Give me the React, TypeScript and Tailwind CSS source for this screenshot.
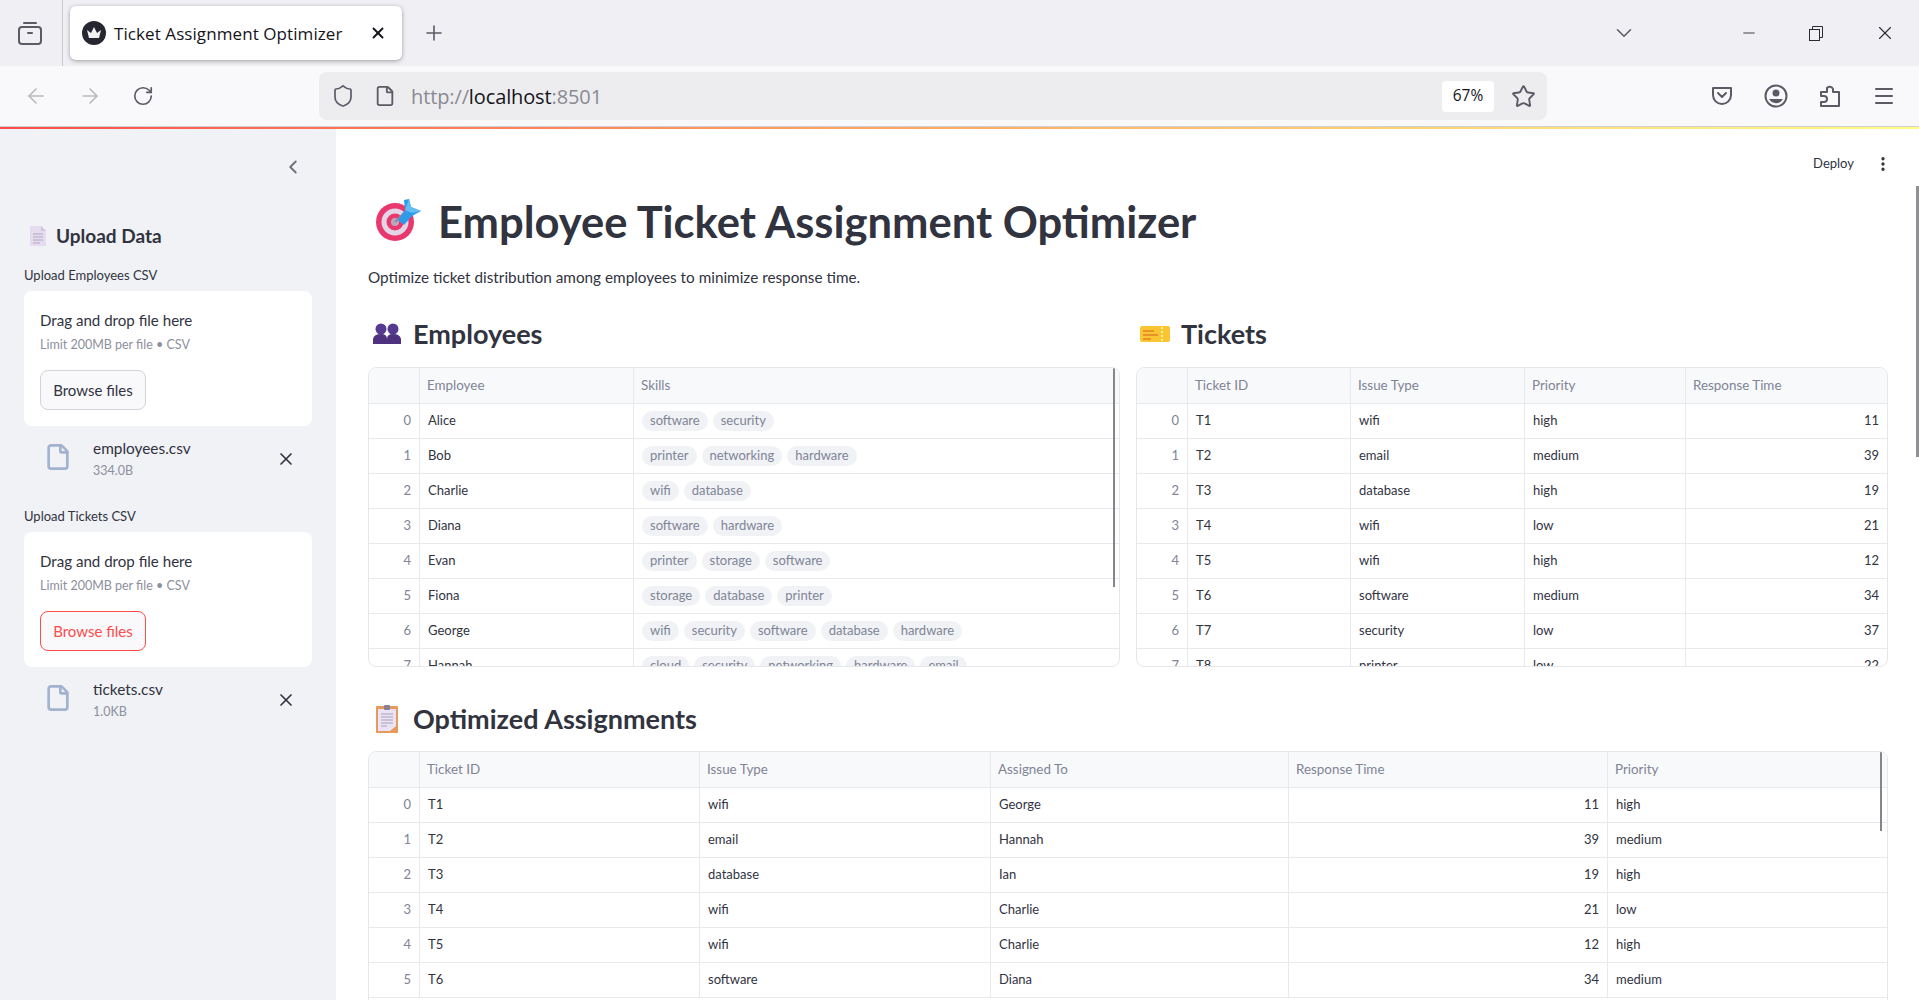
import React from "react";
import { ArrowLeft, ArrowRight, ChevronDown, ChevronLeft, EllipsisVertical, File, Menu, Minus, Plus, RotateCw, Shield, Star, X } from "lucide-react";

const employees: [string, string[]][] = [
  ["Alice", ["software", "security"]],
  ["Bob", ["printer", "networking", "hardware"]],
  ["Charlie", ["wifi", "database"]],
  ["Diana", ["software", "hardware"]],
  ["Evan", ["printer", "storage", "software"]],
  ["Fiona", ["storage", "database", "printer"]],
  ["George", ["wifi", "security", "software", "database", "hardware"]],
  ["Hannah", ["cloud", "security", "networking", "hardware", "email"]],
];

const tickets = [
  ["T1", "wifi", "high", "11"],
  ["T2", "email", "medium", "39"],
  ["T3", "database", "high", "19"],
  ["T4", "wifi", "low", "21"],
  ["T5", "wifi", "high", "12"],
  ["T6", "software", "medium", "34"],
  ["T7", "security", "low", "37"],
  ["T8", "printer", "low", "22"],
];

const assignments = [
  ["T1", "wifi", "George", "11", "high"],
  ["T2", "email", "Hannah", "39", "medium"],
  ["T3", "database", "Ian", "19", "high"],
  ["T4", "wifi", "Charlie", "21", "low"],
  ["T5", "wifi", "Charlie", "12", "high"],
  ["T6", "software", "Diana", "34", "medium"],
];

const cell = "flex items-center px-2 border-r border-b border-[#e8e9ec] last:border-r-0 overflow-hidden whitespace-nowrap";

function Uploader({ label, file, size, active }: { label: string; file: string; size: string; active?: boolean }) {
  return (
    <div>
      <div className="h-[31px] flex items-center text-[13px] text-[#31333f]">{label}</div>
      <div className="h-[135px] rounded-lg bg-white p-4 pt-[19px]">
        <div className="text-[15.1px] leading-5 text-[#31333f]">Drag and drop file here</div>
        <div className="mt-[7px] text-[12.5px] leading-4 text-[#8d8f9d]">Limit 200MB per file • CSV</div>
        <button
          className={`mt-[17px] h-10 w-[106px] rounded-lg border bg-[#f9f9fb] text-[15px] ${
            active ? "border-[#ff4b4b] text-[#ff4b4b]" : "border-[#d2d3d8] text-[#31333f]"
          }`}
        >
          Browse files
        </button>
      </div>
      <div className="flex items-center h-[65px] pl-[20px] pr-[16px]">
        <File size={28} strokeWidth={2.3} className="mb-[4px] text-[#a3b2ce] shrink-0" />
        <div className="ml-[21px] flex-1">
          <div className="text-[15.4px] leading-5 text-[#31333f]">{file}</div>
          <div className="mt-[5px] text-[12.5px] leading-4 text-[#8d8f9d]">{size}</div>
        </div>
        <X size={20} strokeWidth={2} className="text-[#31333f]" />
      </div>
    </div>
  );
}

function Chips({ items }: { items: string[] }) {
  return (
    <div className="flex gap-[5px]">
      {items.map((s) => (
        <span key={s} className="h-[20px] px-2 flex items-center rounded-full bg-[#f0f2f6] text-[#808495] text-[13px]">
          {s}
        </span>
      ))}
    </div>
  );
}

function TableShell({ grid, heads, children }: { grid: string; heads: string[]; children: React.ReactNode }) {
  return (
    <div className="relative h-[300px] overflow-hidden rounded-lg border border-[#e6e7ea] text-[13px] text-[#31333f]">
      <div className={`grid h-[36px] bg-[#f8f9fb] text-[#808495] text-[13.4px] ${grid}`}>
        <div className={cell} />
        {heads.map((h) => (
          <div key={h} className={cell}>
            <span className="-ml-[1px]">{h}</span>
          </div>
        ))}
      </div>
      {children}
    </div>
  );
}

function Row({ grid, index, children }: { grid: string; index: number; children: React.ReactNode }) {
  return (
    <div className={`grid h-[35px] ${grid}`}>
      <div className={`${cell} justify-end text-[#808495]`}>{index}</div>
      {children}
    </div>
  );
}

function Heading({ icon, title }: { icon: React.ReactNode; title: string }) {
  return (
    <div className="flex items-center h-[40px] gap-[11px] pl-[4px]">
      <div className="flex items-center justify-center w-[30px] shrink-0">{icon}</div>
      <h2 className="pb-[2px] text-[27px] font-bold text-[#31333f] leading-none whitespace-nowrap">{title}</h2>
    </div>
  );
}

function TargetIcon() {
  return (
    <svg width="48" height="48" viewBox="0 0 48 48" className="shrink-0 -mt-[8px]">
      <circle cx="21" cy="28" r="19" fill="#e8386e" />
      <circle cx="21" cy="28" r="13.5" fill="#e4d5e6" />
      <circle cx="21" cy="28" r="8.5" fill="#e8386e" />
      <circle cx="21" cy="28" r="4" fill="#b9a9bd" />
      <path d="M21 28 L30 19" stroke="#8a8ea0" strokeWidth="2" />
      <path d="M24 26 L31 16 L30 6 L35 5 L37 13 L47 17 L38 22 L30 31 Z" fill="#2f9be8" />
      <path d="M31 16 L35 5 L37 13 L47 17 L38 19 Z" fill="#62bdf3" />
    </svg>
  );
}

function PeopleIcon() {
  return (
    <svg width="28" height="22" viewBox="0 0 28 22">
      <circle cx="8" cy="6" r="5.5" fill="#553a8f" />
      <path d="M0 21 V16 Q1 11 8 11 Q14 11 14 16 V21 Z" fill="#4f327f" />
      <circle cx="20" cy="6" r="5.5" fill="#553a8f" />
      <path d="M14 21 V16 Q14 11 20 11 Q27 11 28 16 V21 Z" fill="#4f327f" />
    </svg>
  );
}

function TicketIcon() {
  return (
    <svg width="30" height="18" viewBox="0 0 30 18">
      <path d="M2 1 H28 Q30 1 30 3 V15 Q30 17 28 17 H2 Q0 17 0 15 V3 Q0 1 2 1 Z" fill="#fbc531" />
      <rect x="3" y="5" width="11" height="2" fill="#e8932a" />
      <rect x="3" y="9" width="15" height="2" fill="#e8932a" />
      <rect x="3" y="13" width="8" height="2" fill="#e8932a" />
      <path d="M22 2 V16" stroke="#fff3b0" strokeWidth="2" strokeDasharray="2 2" />
    </svg>
  );
}

function ClipboardIcon() {
  return (
    <svg width="22" height="28" viewBox="0 0 22 28">
      <rect x="0" y="1" width="22" height="27" rx="1" fill="#e89a5c" />
      <path d="M2 4 H20 V21 L14 26 H2 Z" fill="#e9e3f5" />
      <rect x="8" y="0" width="6" height="5" rx="1" fill="#8a7f94" />
      <path d="M5 9 H17 M5 12 H17 M5 15 H17 M5 18 H17 M5 21 H11" stroke="#a9a2b5" strokeWidth="1" />
    </svg>
  );
}

function PageIcon() {
  return (
    <svg width="18" height="22" viewBox="0 0 18 22" className="shrink-0">
      <path d="M1 1 H12 L17 6 V21 H1 Z" fill="#e6dcf0" />
      <path d="M12 1 L17 6 H12 Z" fill="#cfc4dc" />
      <path d="M4 9 H14 M4 12 H14 M4 15 H14 M4 18 H11" stroke="#b3a9c0" strokeWidth="1" />
    </svg>
  );
}

function Crown() {
  return (
    <svg width="24" height="24" viewBox="0 0 24 24">
      <circle cx="12" cy="12" r="12" fill="#262730" />
      <path d="M5 9 L9 12 L12 6 L15 12 L19 9 L17 17 H7 Z" fill="#f3f2f2" />
    </svg>
  );
}

function ViewIcon() {
  return (
    <svg width="24" height="24" viewBox="0 0 24 24" fill="none" stroke="#5b5b66" strokeWidth="2" strokeLinecap="round">
      <path d="M6 2 H18" />
      <rect x="1" y="6" width="22" height="17" rx="3" />
      <path d="M10 12 H14" />
    </svg>
  );
}

function PocketIcon() {
  return (
    <svg width="22" height="22" viewBox="0 0 22 22" fill="none" stroke="#5b5b66" strokeWidth="2" strokeLinecap="round" strokeLinejoin="round">
      <path d="M2 3 H20 V10 A9 9 0 0 1 2 10 Z" />
      <path d="M7 8 L11 12 L15 8" />
    </svg>
  );
}

function AccountIcon() {
  return (
    <svg width="24" height="24" viewBox="0 0 24 24" fill="none">
      <circle cx="12" cy="12" r="10.5" stroke="#5b5b66" strokeWidth="2" />
      <circle cx="12" cy="9" r="3.5" fill="#5b5b66" />
      <path d="M5 15 H19 A8 8 0 0 1 5 15 Z" fill="#5b5b66" />
    </svg>
  );
}

function PuzzleIcon() {
  return (
    <svg width="22" height="24" viewBox="0 0 22 24" fill="none" stroke="#5b5b66" strokeWidth="2" strokeLinejoin="round">
      <path d="M2 22 H20 V8 H14 V5 A3.5 3.5 0 0 0 8 4 V8 H2 V12 H5 A2.5 2.5 0 0 1 5 18 H2 Z" />
    </svg>
  );
}

function RestoreIcon() {
  return (
    <svg width="14" height="15" viewBox="0 0 14 15" fill="none" stroke="#2b2b33" strokeWidth="1">
      <rect x="0.5" y="3.5" width="10" height="11" />
      <path d="M3.5 3.5 V0.5 H13.5 V11.5 H10.5" />
    </svg>
  );
}

export default function App() {
  const empGrid = "grid-cols-[51px_214px_1fr]";
  const tktGrid = "grid-cols-[51px_163px_174px_161px_1fr]";
  const asgGrid = "grid-cols-[51px_280px_291px_298px_319px_1fr]";

  return (
    <div className="flex flex-col h-screen w-full overflow-hidden bg-white font-['Lato','Noto_Sans',sans-serif]">
      {/* Browser tab strip */}
      <div className="flex items-center h-[66px] shrink-0 bg-[#f0f0f4] font-['Open_Sans',sans-serif]">
        <div className="flex items-center justify-center w-[63px] h-full pr-[2px] border-r border-[#c9c9ce]">
          <ViewIcon />
        </div>
        <div className="ml-[7px] flex items-center w-[332px] h-[54px] rounded-md bg-white shadow-[0_1px_4px_rgba(0,0,0,0.35)] pl-3">
          <Crown />
          <span className="ml-[8px] pt-[1px] text-[17px] tracking-[0.08px] text-[#15141a] whitespace-nowrap">Ticket Assignment Optimizer</span>
          <X size={18} strokeWidth={2.5} className="ml-auto mr-[15px] text-[#15141a]" />
        </div>
        <Plus size={24} strokeWidth={1.6} className="ml-[20px] text-[#5b5b66]" />
        <ChevronDown size={26} strokeWidth={1.4} className="ml-auto text-[#5b5b66]" />
        <div className="flex items-center ml-[103px] mr-[23px] gap-[51px]">
          <Minus size={18} strokeWidth={1.2} className="text-[#2b2b33]" />
          <RestoreIcon />
          <X size={22} strokeWidth={1.2} className="text-[#2b2b33]" />
        </div>
      </div>

      {/* Browser toolbar */}
      <div className="flex items-center h-[61px] shrink-0 bg-[#f9f9fb] border-b border-[#cfcfd4]">
        <div className="flex items-center pl-[24px] gap-[30px] w-[319px]">
          <ArrowLeft size={24} strokeWidth={1.6} className="text-[#b9b9bd]" />
          <ArrowRight size={24} strokeWidth={1.6} className="text-[#b9b9bd]" />
          <RotateCw size={22} strokeWidth={1.8} className="text-[#5b5b66]" />
        </div>
        <div className="flex items-center w-[1228px] h-[48px] rounded-lg bg-[#ededf0]">
          <Shield size={24} strokeWidth={1.7} className="ml-[12px] text-[#5b5b66]" />
          <File size={22} strokeWidth={2} className="ml-[19px] text-[#5b5b66]" />
          <div className="ml-[15px] pt-[2px] text-[20px] text-[#8a8a92] font-['Open_Sans',sans-serif] tracking-[-0.12px]">
            http://<span className="text-[#15141a]">localhost</span>:8501
          </div>
          <div className="ml-auto flex items-center justify-center w-[52px] h-[31px] rounded bg-white text-[15.5px] text-[#15141a] font-['Open_Sans',sans-serif]">
            67%
          </div>
          <Star size={25} strokeWidth={1.8} className="ml-[17px] mr-[11px] text-[#5b5b66]" />
        </div>
        <div className="flex items-center ml-[164px] gap-[31px]">
          <PocketIcon />
          <AccountIcon />
          <PuzzleIcon />
          <Menu size={24} strokeWidth={2} className="text-[#5b5b66]" />
        </div>
      </div>

      {/* Streamlit decoration line */}
      <div className="h-[2px] shrink-0 bg-gradient-to-r from-[#ff4b4b] to-[#fffd80]" />

      <div className="flex flex-1 min-h-0">
        {/* Sidebar */}
        <aside className="w-[336px] shrink-0 bg-[#f0f2f6] px-6">
          <div className="flex justify-end h-[92px] pt-[27px] pr-[8px]">
            <ChevronLeft size={22} strokeWidth={2} className="text-[#6c6e7a]" />
          </div>
          <div className="flex items-center h-[30px] gap-[9px] pl-[5px]">
            <PageIcon />
            <h2 className="text-[19px] font-bold text-[#31333f]">Upload Data</h2>
          </div>
          <div className="mt-[9px] flex flex-col gap-[10px]">
            <Uploader label="Upload Employees CSV" file="employees.csv" size="334.0B" />
            <Uploader label="Upload Tickets CSV" file="tickets.csv" size="1.0KB" active />
          </div>
        </aside>

        {/* Main content */}
        <main className="relative flex-1 min-w-0 pl-[32px] pr-[31px]">
          <div className="flex items-center justify-end gap-[20px] h-[55px] pt-[15px] -mr-[4px] text-[#31333f] text-[13px]">
            <span>Deploy</span>
            <EllipsisVertical size={18} strokeWidth={2.4} />
          </div>

          <div className="flex items-center h-[74px] gap-[16px] pl-[6px] pt-[2px]">
            <TargetIcon />
            <h1 className="text-[43.5px] font-bold text-[#31333f] leading-none whitespace-nowrap">Employee Ticket Assignment Optimizer</h1>
          </div>
          <p className="mt-[7px] text-[15.3px] leading-6 text-[#31333f]">Optimize ticket distribution among employees to minimize response time.</p>

          <div className="mt-[25px] grid grid-cols-2 gap-4">
            <div>
              <Heading icon={<PeopleIcon />} title="Employees" />
              <div className="mt-[13px]">
                <TableShell grid={empGrid} heads={["Employee", "Skills"]}>
                  {employees.map(([name, skills], i) => (
                    <Row key={name} grid={empGrid} index={i}>
                      <div className={cell}>{name}</div>
                      <div className={cell}>
                        <Chips items={skills} />
                      </div>
                    </Row>
                  ))}
                  <div className="absolute right-[4px] top-0 w-[2px] h-[219px] bg-[#85858a]" />
                </TableShell>
              </div>
            </div>
            <div>
              <Heading icon={<TicketIcon />} title="Tickets" />
              <div className="mt-[13px]">
                <TableShell grid={tktGrid} heads={["Ticket ID", "Issue Type", "Priority", "Response Time"]}>
                  {tickets.map((t, i) => (
                    <Row key={t[0]} grid={tktGrid} index={i}>
                      <div className={cell}>{t[0]}</div>
                      <div className={cell}>{t[1]}</div>
                      <div className={cell}>{t[2]}</div>
                      <div className={`${cell} justify-end`}>{t[3]}</div>
                    </Row>
                  ))}
                </TableShell>
              </div>
            </div>
          </div>

          <div className="mt-[32px]">
            <Heading icon={<ClipboardIcon />} title="Optimized Assignments" />
            <div className="mt-[12px]">
              <TableShell grid={asgGrid} heads={["Ticket ID", "Issue Type", "Assigned To", "Response Time", "Priority"]}>
                {assignments.map((a, i) => (
                  <Row key={a[0]} grid={asgGrid} index={i}>
                    <div className={cell}>{a[0]}</div>
                    <div className={cell}>{a[1]}</div>
                    <div className={cell}>{a[2]}</div>
                    <div className={`${cell} justify-end`}>{a[3]}</div>
                    <div className={cell}>{a[4]}</div>
                  </Row>
                ))}
                <div className="absolute right-[5px] top-0 w-[2px] h-[79px] bg-[#85858a]" />
              </TableShell>
            </div>
          </div>

          {/* page scrollbar */}
          <div className="absolute right-0 top-[57px] w-[3px] h-[271px] bg-[#8f8f94]" />
        </main>
      </div>
    </div>
  );
}
